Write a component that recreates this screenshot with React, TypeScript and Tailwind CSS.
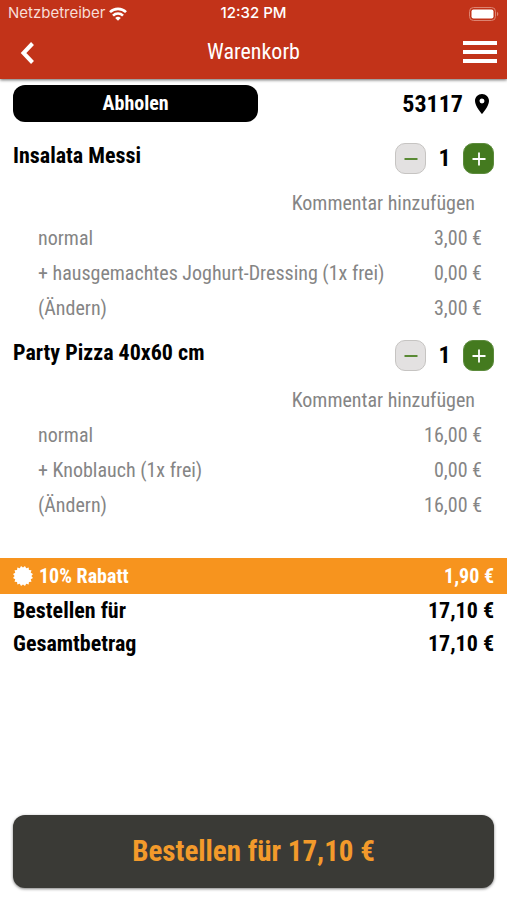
import { useState } from "react";
import { MdLocationOn } from "react-icons/md";

const items = [
  {
    id: 1,
    title: "Insalata Messi",
    rows: [
      { label: "normal", price: "3,00 €" },
      { label: "+ hausgemachtes Joghurt-Dressing (1x frei)", price: "0,00 €" },
    ],
    total: "3,00 €",
  },
  {
    id: 2,
    title: "Party Pizza 40x60 cm",
    rows: [
      { label: "normal", price: "16,00 €" },
      { label: "+ Knoblauch (1x frei)", price: "0,00 €" },
    ],
    total: "16,00 €",
  },
];

const totals = [
  { label: "Bestellen für", value: "17,10 €" },
  { label: "Gesamtbetrag", value: "17,10 €" },
];

// 16-pointed badge outline
const sealPoints = Array.from({ length: 32 }, (_, i) => {
  const r = i % 2 === 0 ? 10.2 : 8.4;
  const a = ((i + 1) * Math.PI) / 16;
  return `${10 + r * Math.sin(a)},${10 - r * Math.cos(a)}`;
}).join(" ");

function WifiIcon() {
  return (
    <svg viewBox="0 0 18 14" className="w-[18px] h-[14px]" fill="none" stroke="white" strokeWidth="2.6">
      <path d="M1 5.2a11.3 11.3 0 0 1 16 0" />
      <path d="M4 8.6a7 7 0 0 1 10 0" />
      <path d="M9 13.8 6.2 11a4 4 0 0 1 5.6 0z" fill="white" stroke="none" />
    </svg>
  );
}

function BatteryIcon() {
  return (
    <svg viewBox="0 0 30 14" className="w-[30px] h-[14px]">
      <rect x="0.5" y="0.5" width="26" height="13" rx="4" fill="none" stroke="#dc8472" />
      <rect x="2.5" y="2.5" width="22" height="9" rx="2" fill="white" />
      <path d="M28 4.8a2.5 2.5 0 0 1 0 4.4z" fill="#dc8472" />
    </svg>
  );
}

function Stepper({ name }: { name: string }) {
  const [count, setCount] = useState(1);

  return (
    <div className="flex items-center shrink-0">
      <button
        aria-label={`${name} entfernen`}
        onClick={() => setCount(Math.max(0, count - 1))}
        className="w-[31px] h-[31px] rounded-[10px] bg-[#e3e1e1] border border-[#c6c4c2] flex items-center justify-center"
      >
        <svg viewBox="0 0 14 14" className="w-[14px] h-[14px]" stroke="#5a8a35" strokeWidth="2">
          <path d="M0.5 7h13" />
        </svg>
      </button>
      <span className="w-[37px] text-center text-[24px] leading-[31px] font-bold">{count}</span>
      <button
        aria-label={`${name} hinzufügen`}
        onClick={() => setCount(count + 1)}
        className="w-[31px] h-[31px] rounded-[10px] bg-[#447a1f] border border-[#5c8b3c] flex items-center justify-center"
      >
        <svg viewBox="0 0 14 14" className="w-[14px] h-[14px]" stroke="white" strokeWidth="1.8">
          <path d="M0.5 7h13M7 0.5v13" />
        </svg>
      </button>
    </div>
  );
}

export default function App() {
  return (
    <div className="min-h-screen flex flex-col bg-white text-black font-['Roboto_Condensed',Roboto,sans-serif]">
      {/* Header */}
      <header className="bg-[#c23319] text-white shadow-[0_1px_3px_rgba(0,0,0,0.6)]">
        <div className="grid grid-cols-3 items-center h-[27px] px-2 font-[Inter,sans-serif] text-[15px]">
          <div className="flex items-center gap-1">
            <span className="text-[#f8ddd7]">Netzbetreiber</span>
            <WifiIcon />
          </div>
          <span className="text-center font-medium">12:32 PM</span>
          <div className="flex justify-end">
            <BatteryIcon />
          </div>
        </div>
        <div className="grid grid-cols-3 items-center h-[52px] px-[10px]">
          <button aria-label="Zurück" className="w-[34px] flex justify-center">
            <svg viewBox="0 0 15 22" className="w-[15px] h-[22px]" fill="none" stroke="white" strokeWidth="4">
              <path d="M12.5 1.5 3.5 11l9 9.5" />
            </svg>
          </button>
          <h1 className="text-center text-[22px] leading-6 pb-[2px]">Warenkorb</h1>
          <button aria-label="Menü" className="justify-self-end">
            <svg viewBox="0 0 34 24" className="w-[34px] h-6" fill="white">
              <path d="M0 0h34v4H0zM0 9h34v4H0zM0 18h34v4H0z" />
            </svg>
          </button>
        </div>
      </header>

      <main className="flex-1 flex flex-col">
        <div className="flex items-center justify-between pt-[6px] pb-[7px] px-[13px]">
          <button className="w-[51%] h-[37px] rounded-xl bg-black text-white text-[20px] leading-6 pb-[2px] font-bold">
            Abholen
          </button>
          <button className="flex items-center gap-[7px] text-[24px] font-bold">
            53117
            <MdLocationOn className="w-6 h-6" />
          </button>
        </div>

        {/* Cart items */}
        {items.map((item) => (
          <section key={item.id} className="text-[20px] leading-[35px] text-[#858585]">
            <div className="flex items-start justify-between h-[57px] pt-[14px] px-[13px] text-black">
              <h2 className="text-[22px] leading-[26px] font-bold">{item.title}</h2>
              <Stepper name={item.title} />
            </div>
            <div className="flex justify-end pr-8">
              <button>Kommentar hinzufügen</button>
            </div>
            {item.rows.map((row) => (
              <div key={row.label} className="flex justify-between pl-[38px] pr-[25px]">
                <span>{row.label}</span>
                <span>{row.price}</span>
              </div>
            ))}
            <div className="flex justify-between pl-[38px] pr-[25px]">
              <button>(Ändern)</button>
              <span>{item.total}</span>
            </div>
          </section>
        ))}

        {/* Discount */}
        <div className="flex items-center justify-between mt-[35px] h-9 px-[13px] bg-[#f7941e] text-white text-[20px] font-bold">
          <div className="flex items-center gap-[6px]">
            <svg viewBox="0 0 20 20" className="w-5 h-5" fill="white">
              <polygon points={sealPoints} />
            </svg>
            <span>10% Rabatt</span>
          </div>
          <span>1,90 €</span>
        </div>

        {totals.map((row) => (
          <div key={row.label} className="flex justify-between px-[13px] text-[22px] leading-[33px] font-bold">
            <span>{row.label}</span>
            <span>{row.value}</span>
          </div>
        ))}

        <div className="mt-auto px-[13px] pb-3 pt-6">
          <button className="w-full h-[73px] rounded-xl bg-[#3a3a36] text-[#f39a2b] text-[29px] font-bold shadow-[0_1px_3px_rgba(0,0,0,0.5)]">
            Bestellen für 17,10 €
          </button>
        </div>
      </main>
    </div>
  );
}
